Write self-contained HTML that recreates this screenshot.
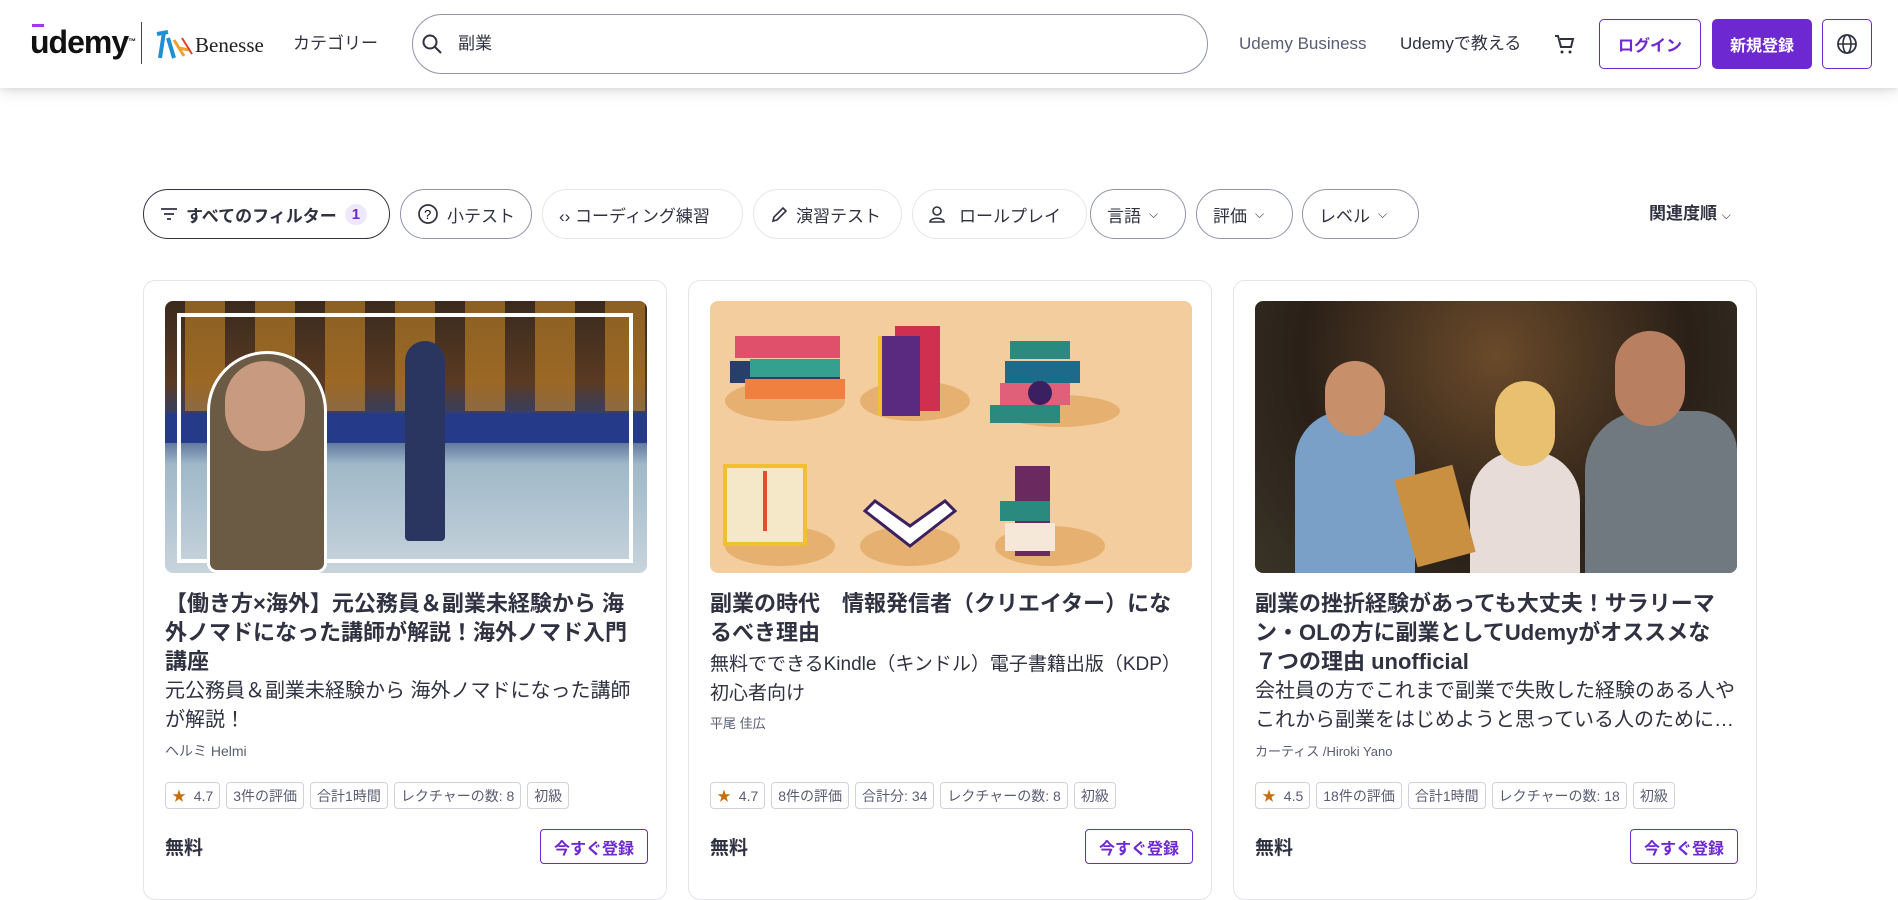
<!DOCTYPE html>
<html><head><meta charset="utf-8">
<style>
*{box-sizing:border-box;margin:0;padding:0}
body{width:1898px;height:865px;overflow:hidden;background:#fff;font-family:"Liberation Sans","Noto Sans CJK JP",sans-serif;color:#303141;position:relative}
.hdr{position:absolute;left:0;top:0;width:1898px;height:88px;background:#fff;box-shadow:0 2px 6px rgba(0,0,0,.08),0 6px 14px rgba(0,0,0,.08)}
.abs{position:absolute}
.search{left:412px;top:14px;width:796px;height:60px;border:1px solid #9194ac;border-radius:30px}
.nav{font-size:17px;color:#303141;top:34px;line-height:20px;white-space:nowrap}
.btn{border:1px solid #6d28d2;border-radius:5px;height:50px;top:19px;display:flex;align-items:center;justify-content:center;font-weight:bold;font-size:16px}
.pill{position:absolute;top:189px;height:50px;border:1px solid #9194ac;border-radius:25px;display:flex;align-items:center;padding:0 16px;font-size:17px;color:#303141;gap:8px;white-space:nowrap}
.pill.l{border-color:#e6e6ea}
.card{position:absolute;top:280px;width:524px;height:620px;border:1px solid #e4e4ea;border-radius:12px}
.img{position:absolute;left:21px;top:20px;width:482px;height:272px;border-radius:8px;overflow:hidden}
.t{position:absolute;left:21px;width:475px;font-size:22px;font-weight:bold;line-height:29px;color:#303141}
.s{position:absolute;left:21px;width:485px;font-size:20px;line-height:29px;color:#303141}
.ins{position:absolute;left:21px;font-size:14px;color:#595c73}
.badges{position:absolute;left:21px;top:501px;display:flex;gap:6px}
.b{height:27px;border:1px solid #d1d2e0;border-radius:4px;padding:0 6px;font-size:14px;color:#595c73;display:flex;align-items:center;white-space:nowrap}
.free{position:absolute;left:21px;top:552px;font-size:19px;font-weight:bold}
.reg{position:absolute;left:396px;top:548px;width:108px;height:35px;border:1px solid #6d28d2;border-radius:4px;color:#6d28d2;font-weight:bold;font-size:16px;display:flex;align-items:center;justify-content:center}
</style></head><body>
<div class="hdr">
  <div class="abs" style="left:30px;top:24px;font-size:32px;font-weight:bold;letter-spacing:-1px;color:#111;line-height:36px">udemy<span style="font-size:8px;vertical-align:top">™</span></div>
  <div class="abs" style="left:32px;top:24px;width:12px;height:6px;border-top:3px solid #a435f0;"></div>
  <div class="abs" style="left:141px;top:22px;width:1px;height:42px;background:#444"></div>
  <svg class="abs" style="left:154px;top:28px" width="40" height="34"><path d="M3 6 L14 4 M10 4 L6 30 M14 10 L20 30" stroke="#1e8fd0" stroke-width="4" fill="none"/><path d="M20 12 L30 28 M24 20 L36 22" stroke="#f0a030" stroke-width="3" fill="none"/><path d="M28 10 L38 26" stroke="#e04030" stroke-width="2" fill="none"/></svg>
  <div class="abs" style="left:195px;top:33px;font-family:'Liberation Serif',serif;font-size:21px;color:#222;line-height:24px">Benesse</div>
  <div class="abs nav" style="left:293px">カテゴリー</div>
  <div class="abs search"></div>
  <svg class="abs" style="left:421px;top:33px" width="22" height="22"><circle cx="9" cy="9" r="6.5" stroke="#303141" stroke-width="2" fill="none"/><path d="M14 14 L20 20" stroke="#303141" stroke-width="2"/></svg>
  <div class="abs nav" style="left:458px">副業</div>
  <div class="abs nav" style="left:1239px;color:#595c73">Udemy Business</div>
  <div class="abs nav" style="left:1400px">Udemyで教える</div>
  <svg class="abs" style="left:1553px;top:33px" width="22" height="22"><path d="M2 3h3l3 11h10l2-8H7" stroke="#303141" stroke-width="2" fill="none"/><circle cx="9" cy="19" r="1.5" fill="#303141"/><circle cx="17" cy="19" r="1.5" fill="#303141"/></svg>
  <div class="abs btn" style="left:1599px;width:102px;color:#6d28d2">ログイン</div>
  <div class="abs btn" style="left:1712px;width:100px;background:#6d28d2;color:#fff">新規登録</div>
  <div class="abs btn" style="left:1822px;width:50px"><svg width="22" height="22"><circle cx="11" cy="11" r="9" stroke="#303141" stroke-width="1.8" fill="none"/><ellipse cx="11" cy="11" rx="4" ry="9" stroke="#303141" stroke-width="1.6" fill="none"/><path d="M2 11h18" stroke="#303141" stroke-width="1.6"/></svg></div>
</div>

<div class="pill" style="left:143px;width:247px;border-color:#303141;font-weight:bold">
<svg width="18" height="14"><path d="M1 2h16M4 7h10M7 12h4" stroke="#303141" stroke-width="1.8"/></svg>すべてのフィルター<span style="background:#eee8fb;color:#6d28d2;border-radius:12px;padding:2px 7px;font-size:15px">1</span></div>
<div class="pill" style="left:400px;width:132px"><svg width="22" height="22"><circle cx="11" cy="11" r="9" stroke="#303141" stroke-width="1.7" fill="none"/><text x="7" y="16" font-size="13" font-family="Liberation Sans">?</text></svg>小テスト</div>
<div class="pill l" style="left:542px;width:201px">‹› コーディング練習</div>
<div class="pill l" style="left:753px;width:149px"><svg width="18" height="18"><path d="M3 16 L4 12 L13 3 L16 6 L7 15 Z" stroke="#303141" stroke-width="1.6" fill="none"/></svg>演習テスト</div>
<div class="pill l" style="left:912px;width:175px"><svg width="22" height="18"><circle cx="8" cy="6" r="4" stroke="#303141" stroke-width="1.6" fill="none"/><path d="M1 17c0-5 14-5 14 0z" stroke="#303141" stroke-width="1.6" fill="none"/></svg>ロールプレイ</div>
<div class="pill" style="left:1090px;width:96px;background:#fff">言語 <span style="font-size:12px">⌵</span></div>
<div class="pill" style="left:1196px;width:97px">評価 <span style="font-size:12px">⌵</span></div>
<div class="pill" style="left:1302px;width:117px">レベル <span style="font-size:12px">⌵</span></div>
<div class="abs" style="left:1649px;top:203px;font-size:17px;font-weight:bold;line-height:22px">関連度順 <span style="font-weight:normal;font-size:12px">⌵</span></div>

<!-- card 1 -->
<div class="card" style="left:143px">
  <div class="img" style="background:linear-gradient(#3a2a1e 0%,#5a3a22 30%,#2d3f7a 45%,#9fb8c8 60%,#c8d4dc 100%)">
    <div class="abs" style="left:0;top:0;width:482px;height:110px;background:repeating-linear-gradient(90deg,transparent 0 20px,rgba(220,150,40,.5) 20px 60px,transparent 60px 70px)"></div>
    <div class="abs" style="left:0;top:112px;width:482px;height:30px;background:#263a8a"></div>
    <div class="abs" style="left:12px;top:12px;width:456px;height:250px;border:4px solid #fff"></div>
    <div class="abs" style="left:240px;top:40px;width:40px;height:200px;background:#2a3660;border-radius:20px 20px 4px 4px"></div>
    <div class="abs" style="left:42px;top:50px;width:120px;height:222px;background:#6b5a44;border-radius:60px 60px 10px 10px;border:3px solid #fff"></div>
    <div class="abs" style="left:60px;top:60px;width:80px;height:90px;background:#c89a80;border-radius:40px"></div>
  </div>
  <div class="t" style="top:308px">【働き方×海外】元公務員＆副業未経験から 海外ノマドになった講師が解説！海外ノマド入門講座</div>
  <div class="s" style="top:396px">元公務員＆副業未経験から 海外ノマドになった講師が解説！</div>
  <div class="ins" style="top:460px">ヘルミ Helmi</div>
  <div class="badges"><div class="b"><span style="color:#c4710d">★</span>&nbsp; 4.7</div><div class="b">3件の評価</div><div class="b">合計1時間</div><div class="b">レクチャーの数: 8</div><div class="b">初級</div></div>
  <div class="free">無料</div>
  <div class="reg">今すぐ登録</div>
</div>

<!-- card 2 -->
<div class="card" style="left:688px">
  <div class="img" style="background:#f3cd9d">
    <svg width="482" height="272">
      <g fill="#e6b070"><ellipse cx="75" cy="100" rx="60" ry="20"/><ellipse cx="205" cy="100" rx="55" ry="20"/><ellipse cx="350" cy="110" rx="60" ry="16"/><ellipse cx="70" cy="245" rx="55" ry="20"/><ellipse cx="200" cy="245" rx="50" ry="20"/><ellipse cx="340" cy="245" rx="55" ry="20"/></g>
      <rect x="20" y="60" width="110" height="22" fill="#26406a"/><rect x="25" y="35" width="105" height="22" fill="#e0506a"/><rect x="35" y="78" width="100" height="20" fill="#f08040"/><rect x="40" y="58" width="90" height="18" fill="#36a090"/>
      <rect x="185" y="25" width="45" height="85" fill="#d03050"/><rect x="170" y="35" width="40" height="80" fill="#5a2a80"/><rect x="168" y="35" width="4" height="80" fill="#f0c030"/>
      <rect x="300" y="40" width="60" height="18" fill="#2a8a80"/><rect x="295" y="60" width="75" height="22" fill="#1e6a8a"/><rect x="290" y="82" width="70" height="22" fill="#e0607a"/><rect x="280" y="104" width="70" height="18" fill="#2a8a80"/><circle cx="330" cy="92" r="12" fill="#3a2060"/>
      <rect x="15" y="165" width="80" height="78" fill="#f5e8c8" stroke="#f0c030" stroke-width="4"/><rect x="53" y="170" width="4" height="60" fill="#e05030"/>
      <path d="M155 210 L200 245 L245 210 L235 200 L200 225 L165 200 Z" fill="#fff" stroke="#3a2060" stroke-width="3"/>
      <rect x="305" y="165" width="35" height="90" fill="#6a2a60"/><rect x="290" y="200" width="50" height="20" fill="#2a8a80"/><rect x="295" y="222" width="50" height="28" fill="#f5e8d8"/>
    </svg>
  </div>
  <div class="t" style="top:308px">副業の時代　情報発信者（クリエイター）になるべき理由</div>
  <div class="s" style="top:369px;font-size:19px;width:482px">無料でできるKindle（キンドル）電子書籍出版（KDP）初心者向け</div>
  <div class="ins" style="top:432px;font-size:13px">平尾 佳広</div>
  <div class="badges"><div class="b"><span style="color:#c4710d">★</span>&nbsp; 4.7</div><div class="b">8件の評価</div><div class="b">合計分: 34</div><div class="b">レクチャーの数: 8</div><div class="b">初級</div></div>
  <div class="free">無料</div>
  <div class="reg">今すぐ登録</div>
</div>

<!-- card 3 -->
<div class="card" style="left:1233px">
  <div class="img" style="background:radial-gradient(circle at 50% 20%,#6a4a2a,#2a2018 60%,#3a3428)">
    <div class="abs" style="left:40px;top:110px;width:120px;height:162px;background:#7aa0c8;border-radius:50px 50px 0 0"></div>
    <div class="abs" style="left:70px;top:60px;width:60px;height:75px;background:#c8906a;border-radius:30px"></div>
    <div class="abs" style="left:215px;top:150px;width:110px;height:122px;background:#e8dcd8;border-radius:50px 50px 0 0"></div>
    <div class="abs" style="left:240px;top:80px;width:60px;height:85px;background:#e8c070;border-radius:30px"></div>
    <div class="abs" style="left:330px;top:110px;width:152px;height:162px;background:#707880;border-radius:60px 40px 0 0"></div>
    <div class="abs" style="left:360px;top:30px;width:70px;height:95px;background:#b88060;border-radius:35px"></div>
    <div class="abs" style="left:150px;top:170px;width:60px;height:90px;background:#c89040;transform:rotate(-15deg)"></div>
  </div>
  <div class="t" style="top:308px">副業の挫折経験があっても大丈夫！サラリーマン・OLの方に副業としてUdemyがオススメな７つの理由 unofficial</div>
  <div class="s" style="top:396px;height:58px;overflow:hidden">会社員の方でこれまで副業で失敗した経験のある人やこれから副業をはじめようと思っている人のために…</div>
  <div class="ins" style="top:460px;font-size:13px">カーティス /Hiroki Yano</div>
  <div class="badges"><div class="b"><span style="color:#c4710d">★</span>&nbsp; 4.5</div><div class="b">18件の評価</div><div class="b">合計1時間</div><div class="b">レクチャーの数: 18</div><div class="b">初級</div></div>
  <div class="free">無料</div>
  <div class="reg">今すぐ登録</div>
</div>
</body></html>
